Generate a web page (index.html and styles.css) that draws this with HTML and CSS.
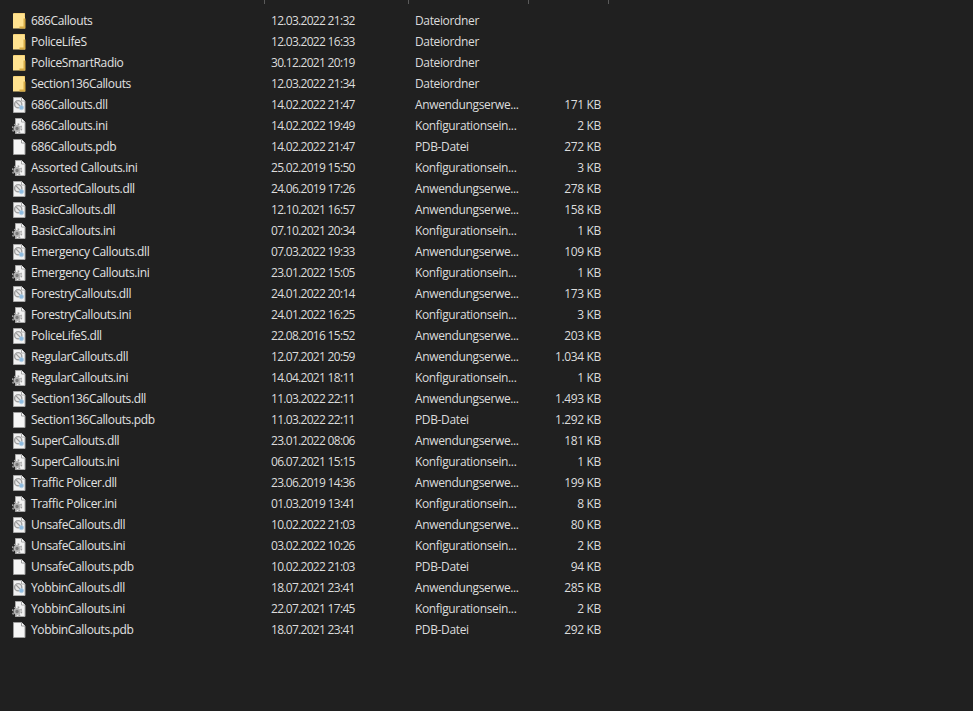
FILE: index.html
```html
<!DOCTYPE html>
<html lang="de">
<head>
<meta charset="utf-8">
<title>Explorer</title>
<link rel="stylesheet" href="styles.css">
</head>
<body>
<svg class="defs" width="0" height="0" aria-hidden="true">
  <defs>
    <symbol id="i-folder" viewBox="0 0 16 16">
      <path d="M1 0.5H13V15.5H1Z" fill="#ffe28f"/>
      <path d="M1.5 0.5H12.5V4" fill="none" stroke="#f6d277"/>
      <path d="M12.5 5.5H11.5V13.5H7.5V15.5H13.5V5.5Z" fill="#d8ac45"/>
    </symbol>
    <symbol id="i-file" viewBox="0 0 16 16">
      <path d="M1.5 0.5H9.5L13 4V15.5H1.5Z" fill="#f6f6f6" stroke="#9c9c9c"/>
      <path d="M9.5 0.5V4H13" fill="#fff" stroke="#9c9c9c"/>
    </symbol>
    <symbol id="i-dll" viewBox="0 0 16 16">
      <path d="M1.5 0.5H9.5L13 4V15.5H1.5Z" fill="#f2f2f2" stroke="#a8a8a8"/>
      <path d="M9.5 0.5V4H13" fill="#fff" stroke="#a8a8a8"/>
      <circle cx="6.2" cy="7.2" r="3.6" fill="#e8e8e8" stroke="#a0a0a0" stroke-width="1.4"/>
      <path d="M4.2 5.2L8.2 9.2" stroke="#9a9a9a" stroke-width="1.2"/>
      <circle cx="9.4" cy="10.6" r="2.2" fill="#8dbbe0" stroke="#b6cfe3" stroke-width="0.8"/>
    </symbol>
    <symbol id="i-ini" viewBox="0 0 16 16">
      <path d="M3.5 0.5H9.5L13 4V15.5H3.5Z" fill="#f2f2f2" stroke="#a8a8a8"/>
      <path d="M9.5 0.5V4H13" fill="#fff" stroke="#a8a8a8"/>
      <circle cx="5" cy="10.5" r="4.5" fill="none" stroke="#a0a0a0" stroke-width="1.5" stroke-dasharray="1.75 1.8"/>
      <circle cx="5" cy="10.5" r="2.6" fill="#7a7a7a" stroke="#b4b4b4" stroke-width="1.8"/>
    </symbol>
  </defs>
</svg>
<div class="head"><span class="tick"></span><span class="tick"></span><span class="tick"></span><span class="tick"></span></div>
<ul class="list">
<li class="row"><svg class="ico"><use href="#i-folder"/></svg><span class="name">686Callouts</span><span class="date">12.03.2022 21:32</span><span class="type">Dateiordner</span><span class="size"></span></li>
<li class="row"><svg class="ico"><use href="#i-folder"/></svg><span class="name">PoliceLifeS</span><span class="date">12.03.2022 16:33</span><span class="type">Dateiordner</span><span class="size"></span></li>
<li class="row"><svg class="ico"><use href="#i-folder"/></svg><span class="name">PoliceSmartRadio</span><span class="date">30.12.2021 20:19</span><span class="type">Dateiordner</span><span class="size"></span></li>
<li class="row"><svg class="ico"><use href="#i-folder"/></svg><span class="name">Section136Callouts</span><span class="date">12.03.2022 21:34</span><span class="type">Dateiordner</span><span class="size"></span></li>
<li class="row"><svg class="ico"><use href="#i-dll"/></svg><span class="name">686Callouts.dll</span><span class="date">14.02.2022 21:47</span><span class="type">Anwendungserwe...</span><span class="size">171 KB</span></li>
<li class="row"><svg class="ico"><use href="#i-ini"/></svg><span class="name">686Callouts.ini</span><span class="date">14.02.2022 19:49</span><span class="type">Konfigurationsein...</span><span class="size">2 KB</span></li>
<li class="row"><svg class="ico"><use href="#i-file"/></svg><span class="name">686Callouts.pdb</span><span class="date">14.02.2022 21:47</span><span class="type">PDB-Datei</span><span class="size">272 KB</span></li>
<li class="row"><svg class="ico"><use href="#i-ini"/></svg><span class="name">Assorted Callouts.ini</span><span class="date">25.02.2019 15:50</span><span class="type">Konfigurationsein...</span><span class="size">3 KB</span></li>
<li class="row"><svg class="ico"><use href="#i-dll"/></svg><span class="name">AssortedCallouts.dll</span><span class="date">24.06.2019 17:26</span><span class="type">Anwendungserwe...</span><span class="size">278 KB</span></li>
<li class="row"><svg class="ico"><use href="#i-dll"/></svg><span class="name">BasicCallouts.dll</span><span class="date">12.10.2021 16:57</span><span class="type">Anwendungserwe...</span><span class="size">158 KB</span></li>
<li class="row"><svg class="ico"><use href="#i-ini"/></svg><span class="name">BasicCallouts.ini</span><span class="date">07.10.2021 20:34</span><span class="type">Konfigurationsein...</span><span class="size">1 KB</span></li>
<li class="row"><svg class="ico"><use href="#i-dll"/></svg><span class="name">Emergency Callouts.dll</span><span class="date">07.03.2022 19:33</span><span class="type">Anwendungserwe...</span><span class="size">109 KB</span></li>
<li class="row"><svg class="ico"><use href="#i-ini"/></svg><span class="name">Emergency Callouts.ini</span><span class="date">23.01.2022 15:05</span><span class="type">Konfigurationsein...</span><span class="size">1 KB</span></li>
<li class="row"><svg class="ico"><use href="#i-dll"/></svg><span class="name">ForestryCallouts.dll</span><span class="date">24.01.2022 20:14</span><span class="type">Anwendungserwe...</span><span class="size">173 KB</span></li>
<li class="row"><svg class="ico"><use href="#i-ini"/></svg><span class="name">ForestryCallouts.ini</span><span class="date">24.01.2022 16:25</span><span class="type">Konfigurationsein...</span><span class="size">3 KB</span></li>
<li class="row"><svg class="ico"><use href="#i-dll"/></svg><span class="name">PoliceLifeS.dll</span><span class="date">22.08.2016 15:52</span><span class="type">Anwendungserwe...</span><span class="size">203 KB</span></li>
<li class="row"><svg class="ico"><use href="#i-dll"/></svg><span class="name">RegularCallouts.dll</span><span class="date">12.07.2021 20:59</span><span class="type">Anwendungserwe...</span><span class="size">1.034 KB</span></li>
<li class="row"><svg class="ico"><use href="#i-ini"/></svg><span class="name">RegularCallouts.ini</span><span class="date">14.04.2021 18:11</span><span class="type">Konfigurationsein...</span><span class="size">1 KB</span></li>
<li class="row"><svg class="ico"><use href="#i-dll"/></svg><span class="name">Section136Callouts.dll</span><span class="date">11.03.2022 22:11</span><span class="type">Anwendungserwe...</span><span class="size">1.493 KB</span></li>
<li class="row"><svg class="ico"><use href="#i-file"/></svg><span class="name">Section136Callouts.pdb</span><span class="date">11.03.2022 22:11</span><span class="type">PDB-Datei</span><span class="size">1.292 KB</span></li>
<li class="row"><svg class="ico"><use href="#i-dll"/></svg><span class="name">SuperCallouts.dll</span><span class="date">23.01.2022 08:06</span><span class="type">Anwendungserwe...</span><span class="size">181 KB</span></li>
<li class="row"><svg class="ico"><use href="#i-ini"/></svg><span class="name">SuperCallouts.ini</span><span class="date">06.07.2021 15:15</span><span class="type">Konfigurationsein...</span><span class="size">1 KB</span></li>
<li class="row"><svg class="ico"><use href="#i-dll"/></svg><span class="name">Traffic Policer.dll</span><span class="date">23.06.2019 14:36</span><span class="type">Anwendungserwe...</span><span class="size">199 KB</span></li>
<li class="row"><svg class="ico"><use href="#i-ini"/></svg><span class="name">Traffic Policer.ini</span><span class="date">01.03.2019 13:41</span><span class="type">Konfigurationsein...</span><span class="size">8 KB</span></li>
<li class="row"><svg class="ico"><use href="#i-dll"/></svg><span class="name">UnsafeCallouts.dll</span><span class="date">10.02.2022 21:03</span><span class="type">Anwendungserwe...</span><span class="size">80 KB</span></li>
<li class="row"><svg class="ico"><use href="#i-ini"/></svg><span class="name">UnsafeCallouts.ini</span><span class="date">03.02.2022 10:26</span><span class="type">Konfigurationsein...</span><span class="size">2 KB</span></li>
<li class="row"><svg class="ico"><use href="#i-file"/></svg><span class="name">UnsafeCallouts.pdb</span><span class="date">10.02.2022 21:03</span><span class="type">PDB-Datei</span><span class="size">94 KB</span></li>
<li class="row"><svg class="ico"><use href="#i-dll"/></svg><span class="name">YobbinCallouts.dll</span><span class="date">18.07.2021 23:41</span><span class="type">Anwendungserwe...</span><span class="size">285 KB</span></li>
<li class="row"><svg class="ico"><use href="#i-ini"/></svg><span class="name">YobbinCallouts.ini</span><span class="date">22.07.2021 17:45</span><span class="type">Konfigurationsein...</span><span class="size">2 KB</span></li>
<li class="row"><svg class="ico"><use href="#i-file"/></svg><span class="name">YobbinCallouts.pdb</span><span class="date">18.07.2021 23:41</span><span class="type">PDB-Datei</span><span class="size">292 KB</span></li>
</ul>
</body>
</html>
```
FILE: styles.css
```css
html, body { margin: 0; padding: 0; background: #202020; height: 100%; overflow: hidden; }
body { font-family: "Open Sans", "Noto Sans", sans-serif; font-size: 12px; color: #dcdcdc; }
.defs { display: block; height: 0; }
.head { display: grid; grid-template-columns: 265px 144px 120px 80px; height: 4px; margin-bottom: 6px; }
.tick { border-right: 1px solid #5a5a5a; }
.list { list-style: none; margin: 0; padding: 0; }
.row { display: grid; grid-template-columns: 13px 16px 242px 144px 120px 66px; align-items: center; height: 21px; white-space: nowrap; letter-spacing: -0.36px; }
.ico { grid-column: 2; width: 16px; height: 16px; margin-left: -1px; }
.name { grid-column: 3; padding-left: 2px; color: #e2e2e2; }
.date { grid-column: 4; letter-spacing: -0.7px; }
.type { grid-column: 5; }
.size { grid-column: 6; text-align: right; }
```
